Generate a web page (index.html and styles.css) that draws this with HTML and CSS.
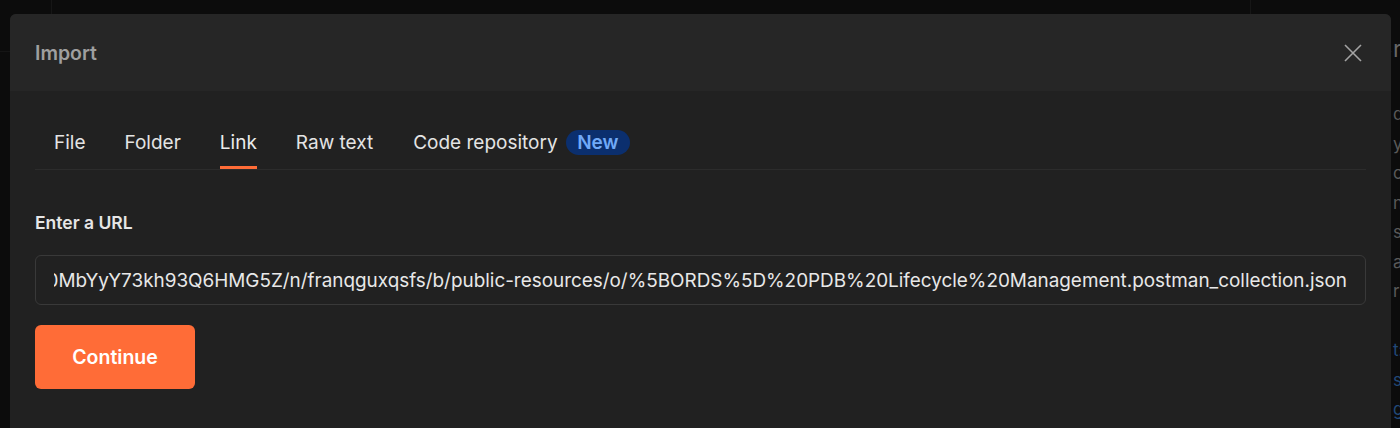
FILE: index.html
```html
<!DOCTYPE html>
<html lang="en">
<head>
<meta charset="utf-8">
<title>Import</title>
<link rel="stylesheet" href="styles.css">
</head>
<body>
<div class="app">
  <div class="app-left">
    <div class="topbar">
      <div class="topbar-cell topbar-cell--a"></div>
      <div class="topbar-cell topbar-cell--b"></div>
      <div class="topbar-cell topbar-cell--c"></div>
    </div>
  </div>
  <div class="doc">
    <div class="doc-title">r</div>
    <div class="doc-lines">
      <div class="doc-line">d</div>
      <div class="doc-line">y</div>
      <div class="doc-line">o</div>
      <div class="doc-line">n</div>
      <div class="doc-line">s</div>
      <div class="doc-line">a</div>
      <div class="doc-line">ri</div>
      <div class="doc-line">&nbsp;</div>
      <div class="doc-line doc-line--link">t:/</div>
      <div class="doc-line doc-line--link">s</div>
      <div class="doc-line doc-line--link">g</div>
    </div>
  </div>
</div>

<div class="modal">
  <div class="modal-header">
    <div class="modal-title">Import</div>
    <button class="close-btn" aria-label="Close">
      <svg width="18" height="18" viewBox="0 0 18 18"><path d="M1 1 L17 17 M17 1 L1 17" stroke="#a3a3a3" stroke-width="1.6" fill="none"/></svg>
    </button>
  </div>
  <div class="modal-body">
    <div class="tabs">
      <div class="tab">File</div>
      <div class="tab">Folder</div>
      <div class="tab tab--active"><span class="tab-label">Link</span></div>
      <div class="tab">Raw text</div>
      <div class="tab tab--last">Code repository<span class="badge">New</span></div>
    </div>
    <div class="field-label">Enter a URL</div>
    <div class="url-input">
      <div class="url-clip">
        <span class="url-text">https://objectstorage.us-ashburn-1.oraclecloud.com/p/Zx8Kq2PpLr4Vt0MbYyY73kh93Q6HMG5Z/n/franqguxqsfs/b/public-resources/o/%5BORDS%5D%20PDB%20Lifecycle%20Management.postman_collection.json</span>
      </div>
    </div>
    <button class="continue-btn">Continue</button>
  </div>
</div>
</body>
</html>
```

FILE: styles.css
```css
* { box-sizing: border-box; }
html, body {
  margin: 0;
  padding: 0;
  width: 1400px;
  height: 428px;
  overflow: hidden;
  background: #0c0c0c;
  font-family: Inter, "Noto Sans", "Liberation Sans", sans-serif;
}

.app {
  display: flex;
  width: 1400px;
  height: 428px;
}
.app-left {
  width: 1392px;
  flex: none;
}
.topbar {
  display: flex;
  height: 52px;
  border-bottom: 1px solid #151515;
}
.topbar-cell { height: 100%; }
.topbar-cell--a { width: 52px; border-right: 1px solid #161616; }
.topbar-cell--b { width: 1199px; border-right: 1px solid #161616; }
.topbar-cell--c { flex: 1; }

.doc {
  flex: 1;
  padding-top: 34px;
  padding-left: 1px;
  color: #595959;
  overflow: hidden;
  white-space: nowrap;
}
.doc-title {
  font-size: 23px;
  line-height: 30px;
  color: #666666;
}
.doc-lines {
  margin-top: 36px;
  font-size: 17px;
  line-height: 29.5px;
}
.doc-line--link { color: #214878; }

.modal {
  position: absolute;
  left: 10px;
  top: 14px;
  width: 1381px;
  height: 430px;
  background: #212121;
  border-radius: 6px 6px 0 0;
  overflow: hidden;
}
.modal-header {
  height: 77px;
  background: #262626;
  display: flex;
  align-items: center;
  justify-content: space-between;
  padding: 0 22px 0 25px;
}
.modal-title {
  font-size: 19.5px;
  font-weight: 600;
  color: #9f9f9f;
  margin-top: 1px;
}
.close-btn {
  width: 32px;
  height: 32px;
  border: 0;
  background: transparent;
  padding: 0;
  display: flex;
  align-items: center;
  justify-content: center;
}

.modal-body {
  padding: 28px 25px 0 25px;
}
.tabs {
  display: flex;
  gap: 39px;
  padding-left: 19px;
  border-bottom: 1px solid #2c2c2c;
}
.tab {
  height: 50px;
  display: flex;
  align-items: center;
  font-size: 19px;
  color: #e4e4e4;
  border-bottom: 3px solid transparent;
}
.tab--last { margin-left: 1px; }
.tab--active {
  border-bottom-color: #ff6c37;
  color: #ececec;
}
.badge {
  margin-left: 8px;
  height: 25px;
  padding: 0 11.5px;
  border-radius: 13px;
  background: #0b2f6e;
  color: #70a9f7;
  font-size: 19px;
  font-weight: 600;
  display: inline-flex;
  align-items: center;
}

.field-label {
  margin-top: 41px;
  font-size: 17.5px;
  line-height: 24px;
  font-weight: 600;
  color: #e6e6e6;
}
.url-input {
  margin-top: 20px;
  height: 50px;
  border: 1px solid #393939;
  border-radius: 6px;
  padding: 0 18px;
  display: flex;
  align-items: center;
}
.url-clip {
  flex: 1;
  overflow: hidden;
  display: flex;
  justify-content: flex-end;
  white-space: nowrap;
}
.url-text {
  flex: none;
  font-size: 18.9px;
  color: #e8e8e8;
}

.continue-btn {
  margin-top: 20px;
  width: 160px;
  height: 64px;
  border: 0;
  border-radius: 6px;
  background: #ff6c37;
  color: #ffffff;
  font-family: Inter, "Noto Sans", "Liberation Sans", sans-serif;
  font-size: 19.5px;
  font-weight: 600;
  display: block;
}
```
